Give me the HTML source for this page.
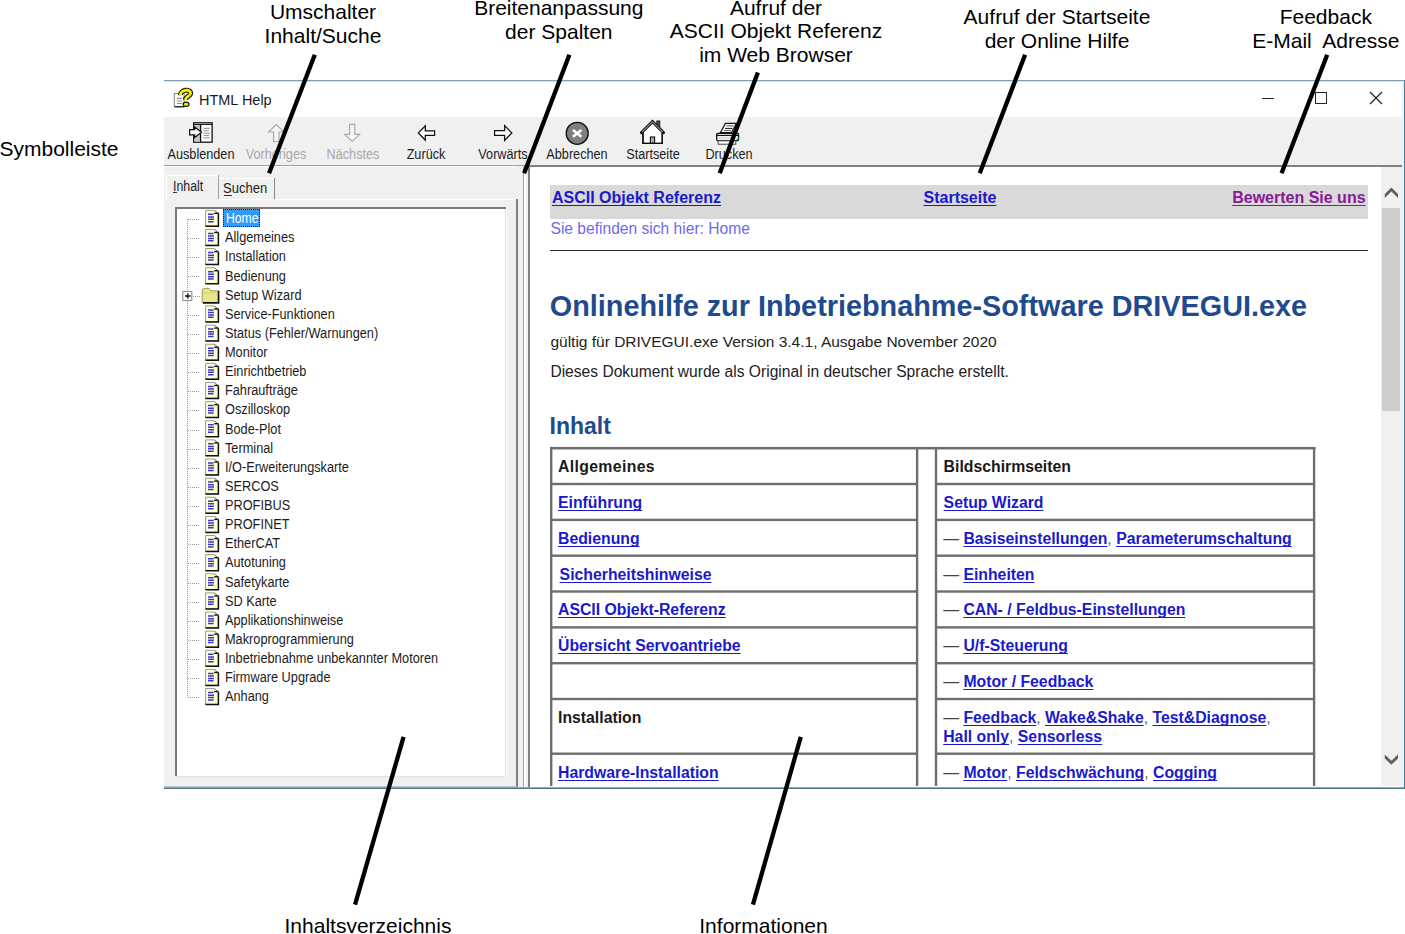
<!DOCTYPE html>
<html><head><meta charset="utf-8"><title>HTML Help</title>
<style>
html,body{margin:0;padding:0;background:#fff;}
body{width:1405px;height:934px;position:relative;overflow:hidden;font-family:"Liberation Sans",sans-serif;}
.t{position:absolute;white-space:nowrap;font-family:"Liberation Sans",sans-serif;}
.r{position:absolute;}
u{text-decoration:underline;text-decoration-skip-ink:none;text-underline-offset:2px;}
.t{text-decoration-skip-ink:none;text-underline-offset:2px;}
</style></head><body>
<div class="r" style="left:164px;top:80px;width:1241px;height:1px;background:#7d9fb3;"></div>
<div class="r" style="left:164px;top:81px;width:1241px;height:1px;background:#d6e4ec;"></div>
<div class="r" style="left:1402px;top:81px;width:2px;height:706px;background:#e8f4f7;"></div>
<div class="r" style="left:1404px;top:80px;width:1px;height:709px;background:#4f7d92;"></div>
<div class="r" style="left:164px;top:787px;width:1241px;height:1px;background:#8eaab6;"></div>
<div class="r" style="left:164px;top:788px;width:1241px;height:1px;background:#4f7585;"></div>
<div class="r" style="left:164px;top:786px;width:353px;height:1px;background:#b4c0c5;"></div>
<svg class="r" style="left:0;top:0" width="1405" height="934" viewBox="0 0 1405 934">
<rect x="174.3" y="93.5" width="9.8" height="13.2" fill="#fdfdfd" stroke="#8a8a8a" stroke-width="1.1"/>
<path d="M174.6 106.7 H184.4" stroke="#333" stroke-width="1.5"/>
<path d="M177 98.4 H182 M177 101 H182 M177 103.5 H182" stroke="#8c8c94" stroke-width="1.1"/>
<path d="M180.4 95.2 C180.2 89.8, 190.6 88.2, 190.6 93.2 C190.6 96.2, 185.6 96.6, 185.2 99.8" fill="none" stroke="#1c1c00" stroke-width="5"/>
<path d="M180.4 95.2 C180.2 89.8, 190.6 88.2, 190.6 93.2 C190.6 96.2, 185.6 96.6, 185.2 99.8" fill="none" stroke="#f4f400" stroke-width="2.8"/>
<ellipse cx="186.1" cy="104.3" rx="2.9" ry="2.1" fill="#f4f400" stroke="#1c1c00" stroke-width="1.2"/>
</svg>
<div class="t" style="left:199.00px;top:91.50px;font-size:15px;line-height:15px;font-weight:400;color:#1a1a1a;transform:scaleX(0.965);transform-origin:0 50%;">HTML Help</div>
<div class="r" style="left:1262px;top:98px;width:12px;height:1px;background:#222;"></div>
<div class="r" style="left:1315px;top:92px;width:10px;height:10px;border:1px solid #222"></div>
<svg class="r" style="left:1369px;top:91px" width="14" height="14" viewBox="0 0 14 14">
<path d="M1 1 L13 13 M13 1 L1 13" stroke="#222" stroke-width="1.2"/></svg>
<div class="r" style="left:164px;top:117px;width:1239px;height:48px;background:#f0f0f0;"></div>
<div class="r" style="left:164px;top:165px;width:360px;height:1px;background:#a0a0a0;"></div>
<div class="r" style="left:164px;top:166px;width:353px;height:621px;background:#f0f0f0;"></div>
<div class="r" style="left:164px;top:166px;width:353px;height:1px;background:#ffffff;"></div>
<div class="r" style="left:517px;top:166px;width:11px;height:621px;background:#f0f0f0;"></div>
<div class="r" style="left:516px;top:199px;width:2px;height:588px;background:#808080;"></div>
<div class="r" style="left:523px;top:167px;width:1px;height:620px;background:#a0a0a0;"></div>
<div class="r" style="left:524px;top:167px;width:2px;height:620px;background:#ffffff;"></div>
<div class="r" style="left:524px;top:165px;width:878px;height:2px;background:#808080;"></div>
<div class="r" style="left:528px;top:167px;width:2px;height:620px;background:#808080;"></div>
<svg class="r" style="left:0;top:0" width="1405" height="934" viewBox="0 0 1405 934">
<!-- Ausblenden -->
<g transform="translate(189,121)">
 <rect x="4.7" y="1.8" width="18.4" height="19.4" fill="#fff" stroke="#111" stroke-width="1.3"/>
 <rect x="5.4" y="3.6" width="5.9" height="17" fill="#c4c4cc"/>
 <path d="M4.7 3.4 H23.1" stroke="#111" stroke-width="1.2"/>
 <path d="M5.4 2.6 H22.4" stroke="#999" stroke-width="0.8"/>
 <path d="M11.6 3.4 V21.2" stroke="#111" stroke-width="1.3"/>
 <path d="M14.5 7.3 H20.8 M14.5 9.8 H20 M14.5 12.3 H20.8 M14.5 14.6 H20 M14.5 16.9 H20.8" stroke="#8a8a8a" stroke-width="1"/>
 <path d="M0.6 8.6 H5.6 V5.9 L12.6 11.3 L5.6 16.6 V13.8 H0.6 Z" fill="#fafafa" stroke="#111" stroke-width="1.2" stroke-linejoin="miter"/>
</g>
<!-- Vorheriges (up arrow, disabled) -->
<path d="M276.3 124.6 L284 132 H279 V141.5 H273.6 V132 H268.6 Z" fill="#f6f6f6" stroke="#a9a9a9" stroke-width="1.2"/>
<!-- Naechstes (down arrow, disabled) -->
<path d="M352.2 141.4 L359.6 134.4 H354.8 V124.4 H349.6 V134.4 H344.6 Z" fill="#f6f6f6" stroke="#a9a9a9" stroke-width="1.2"/>
<!-- Zurueck -->
<path d="M418.4 132.9 L425.3 125.8 V130.9 H434.6 V135.3 H425.3 V140.2 Z" fill="#fff" stroke="#111" stroke-width="1.25"/>
<!-- Vorwaerts -->
<path d="M511.8 132.9 L504.6 125.6 V130.6 H494.6 V135.3 H504.6 V140.4 Z" fill="#fff" stroke="#111" stroke-width="1.25"/>
<!-- Abbrechen -->
<circle cx="577.2" cy="133.3" r="11" fill="#808080" stroke="#111" stroke-width="1.3"/>
<path d="M573 129.9 L581.4 136.7 M581.4 129.9 L573 136.7" stroke="#fff" stroke-width="2.6"/>
<!-- Startseite -->
<rect x="656.8" y="121" width="3" height="8" fill="#555" stroke="#111" stroke-width="0.9"/>
<path d="M643 132 V143.3 H662.2 V132" fill="#fff" stroke="#111" stroke-width="1.4"/>
<path d="M641.6 132.6 L652.5 121.7 L663.4 132.6" fill="none" stroke="#111" stroke-width="3.2" stroke-linecap="round"/>
<path d="M642 132.2 L652.5 121.7 L663 132.2" fill="none" stroke="#999" stroke-width="1.1"/>
<path d="M643.8 132.4 L652.5 123.9 L661.4 132.4 V142.6 H643.8 Z" fill="#fff"/>
<rect x="650.4" y="137.0" width="4.2" height="6.3" fill="#aaa" stroke="#111" stroke-width="1.1"/>
<path d="M643 132.4 V143.4 H662.2 V132.4" fill="none" stroke="#111" stroke-width="1.4"/>
<!-- Drucken -->
<path d="M725.4 123.4 H736.4 L731.6 132.6 H720.4 Z" fill="#fff" stroke="#111" stroke-width="1.2"/>
<path d="M726.4 125.8 H733.5" stroke="#777" stroke-width="1.3"/>
<path d="M725 128.4 H732.3" stroke="#111" stroke-width="1"/>
<path d="M723.8 130.6 H731" stroke="#555" stroke-width="1"/>
<rect x="716.7" y="133.4" width="21.8" height="7.2" rx="1" fill="#fff" stroke="#111" stroke-width="1.4"/>
<rect x="718.3" y="136.5" width="16" height="3" fill="#ddd"/>
<path d="M716.7 135.4 H738" stroke="#111" stroke-width="1.2"/>
<rect x="718.2" y="140.8" width="17.6" height="3.4" fill="#fff" stroke="#444" stroke-width="1"/>
<path d="M736 140 L738.5 138" stroke="#3cc" stroke-width="1.4"/>
</svg>
<div class="t" style="left:-199.30px;width:800px;text-align:center;top:146.75px;font-size:14px;line-height:14px;font-weight:400;color:#1c1c1c;transform:scaleX(0.905);transform-origin:50% 50%;">Ausblenden</div>
<div class="t" style="left:-123.60px;width:800px;text-align:center;top:146.75px;font-size:14px;line-height:14px;font-weight:400;color:#a8a8a8;transform:scaleX(0.905);transform-origin:50% 50%;">Vorheriges</div>
<div class="t" style="left:-47.40px;width:800px;text-align:center;top:146.75px;font-size:14px;line-height:14px;font-weight:400;color:#a8a8a8;transform:scaleX(0.905);transform-origin:50% 50%;">Nächstes</div>
<div class="t" style="left:26.20px;width:800px;text-align:center;top:146.75px;font-size:14px;line-height:14px;font-weight:400;color:#1c1c1c;transform:scaleX(0.905);transform-origin:50% 50%;">Zurück</div>
<div class="t" style="left:102.50px;width:800px;text-align:center;top:146.75px;font-size:14px;line-height:14px;font-weight:400;color:#1c1c1c;transform:scaleX(0.905);transform-origin:50% 50%;">Vorwärts</div>
<div class="t" style="left:177.30px;width:800px;text-align:center;top:146.75px;font-size:14px;line-height:14px;font-weight:400;color:#1c1c1c;transform:scaleX(0.905);transform-origin:50% 50%;">Abbrechen</div>
<div class="t" style="left:252.70px;width:800px;text-align:center;top:146.75px;font-size:14px;line-height:14px;font-weight:400;color:#1c1c1c;transform:scaleX(0.905);transform-origin:50% 50%;">Startseite</div>
<div class="t" style="left:328.50px;width:800px;text-align:center;top:146.75px;font-size:14px;line-height:14px;font-weight:400;color:#1c1c1c;transform:scaleX(0.905);transform-origin:50% 50%;">Drucken</div>
<div class="r" style="left:165px;top:199px;width:351px;height:1px;background:#ffffff;"></div>
<div class="r" style="left:166px;top:175px;width:1px;height:24px;background:#ffffff;"></div>
<div class="r" style="left:166px;top:175px;width:52px;height:1px;background:#ffffff;"></div>
<div class="r" style="left:218px;top:175px;width:1px;height:24px;background:#a0a0a0;"></div>
<div class="r" style="left:166px;top:199px;width:52px;height:1px;background:#f0f0f0;"></div>
<div class="r" style="left:219px;top:178px;width:55px;height:1px;background:#ffffff;"></div>
<div class="r" style="left:274px;top:178px;width:1px;height:21px;background:#888888;"></div>
<div class="t" style="left:173.20px;top:179.35px;font-size:14px;line-height:14px;font-weight:400;color:#1c1c1c;transform:scaleX(0.88);transform-origin:0 50%;">Inhalt</div>
<div class="r" style="left:173px;top:192px;width:4px;height:1px;background:#333;"></div>
<div class="t" style="left:223.20px;top:180.95px;font-size:14px;line-height:14px;font-weight:400;color:#1c1c1c;transform:scaleX(0.93);transform-origin:0 50%;">Suchen</div>
<div class="r" style="left:224px;top:195px;width:8px;height:1px;background:#333;"></div>
<div class="r" style="left:175px;top:207px;width:332px;height:570px;background:#ffffff;"></div>
<div class="r" style="left:175px;top:207px;width:331px;height:2px;background:#7a7a7a;"></div>
<div class="r" style="left:175px;top:207px;width:2px;height:569px;background:#7a7a7a;"></div>
<div class="r" style="left:505px;top:209px;width:1px;height:567px;background:#e3e3e3;"></div>
<div class="r" style="left:175px;top:776px;width:331px;height:1px;background:#e3e3e3;"></div>
<svg class="r" style="left:0;top:0" width="1405" height="934" viewBox="0 0 1405 934">
<path d="M187.5 219.1 V697.4" stroke="#9a9a9a" stroke-width="1" stroke-dasharray="1 1"/>
<path d="M188 219.5 H200" stroke="#9a9a9a" stroke-width="1" stroke-dasharray="1 1"/>
<g transform="translate(205,209.70)"><path d="M0.6 0.6 H9.6 L13.4 4.4 V16.4 H0.6 Z" fill="#ffffd6" stroke="#9a9a9a" stroke-width="1"/><path d="M13.4 4.0 V16.6 H0.4" fill="none" stroke="#111" stroke-width="1.5"/><path d="M9.6 0.6 L13.4 4.4" stroke="#777" stroke-width="1"/><path d="M9.2 3.6 H13.6" stroke="#111" stroke-width="1.4"/><path d="M3 4.6 H8.6 M3 7.2 H9 M3 9.6 H9 M3 12 H8.6" stroke="#3a3ad0" stroke-width="1.5"/></g>
<path d="M188 238.5 H200" stroke="#9a9a9a" stroke-width="1" stroke-dasharray="1 1"/>
<g transform="translate(205,228.83)"><path d="M0.6 0.6 H9.6 L13.4 4.4 V16.4 H0.6 Z" fill="#ffffd6" stroke="#9a9a9a" stroke-width="1"/><path d="M13.4 4.0 V16.6 H0.4" fill="none" stroke="#111" stroke-width="1.5"/><path d="M9.6 0.6 L13.4 4.4" stroke="#777" stroke-width="1"/><path d="M9.2 3.6 H13.6" stroke="#111" stroke-width="1.4"/><path d="M3 4.6 H8.6 M3 7.2 H9 M3 9.6 H9 M3 12 H8.6" stroke="#3a3ad0" stroke-width="1.5"/></g>
<path d="M188 257.5 H200" stroke="#9a9a9a" stroke-width="1" stroke-dasharray="1 1"/>
<g transform="translate(205,247.96)"><path d="M0.6 0.6 H9.6 L13.4 4.4 V16.4 H0.6 Z" fill="#ffffd6" stroke="#9a9a9a" stroke-width="1"/><path d="M13.4 4.0 V16.6 H0.4" fill="none" stroke="#111" stroke-width="1.5"/><path d="M9.6 0.6 L13.4 4.4" stroke="#777" stroke-width="1"/><path d="M9.2 3.6 H13.6" stroke="#111" stroke-width="1.4"/><path d="M3 4.6 H8.6 M3 7.2 H9 M3 9.6 H9 M3 12 H8.6" stroke="#3a3ad0" stroke-width="1.5"/></g>
<path d="M188 276.5 H200" stroke="#9a9a9a" stroke-width="1" stroke-dasharray="1 1"/>
<g transform="translate(205,267.09)"><path d="M0.6 0.6 H9.6 L13.4 4.4 V16.4 H0.6 Z" fill="#ffffd6" stroke="#9a9a9a" stroke-width="1"/><path d="M13.4 4.0 V16.6 H0.4" fill="none" stroke="#111" stroke-width="1.5"/><path d="M9.6 0.6 L13.4 4.4" stroke="#777" stroke-width="1"/><path d="M9.2 3.6 H13.6" stroke="#111" stroke-width="1.4"/><path d="M3 4.6 H8.6 M3 7.2 H9 M3 9.6 H9 M3 12 H8.6" stroke="#3a3ad0" stroke-width="1.5"/></g>
<path d="M193 296.5 H200" stroke="#9a9a9a" stroke-width="1" stroke-dasharray="1 1"/>
<rect x="182.8" y="291.5" width="9" height="9" fill="#fff" stroke="#8e8e8e" stroke-width="1.1"/>
<path d="M185 296.0 H190.6 M187.8 293.2 V298.8" stroke="#111" stroke-width="1.3"/>
<g transform="translate(201.4,287.82)"><path d="M0.8 3.2 Q0.8 0.6 3.2 0.6 H7.6 L9.6 3.0 H16.8 V14.6 H0.8 Z" fill="#e8e888" stroke="#9a9a60" stroke-width="1"/><path d="M1.2 5.0 H16.2" stroke="#d4d460" stroke-width="1"/><path d="M17.2 3.0 V15.1 H1.5" fill="none" stroke="#111" stroke-width="1.6"/></g>
<path d="M188 315.5 H200" stroke="#9a9a9a" stroke-width="1" stroke-dasharray="1 1"/>
<g transform="translate(205,305.35)"><path d="M0.6 0.6 H9.6 L13.4 4.4 V16.4 H0.6 Z" fill="#ffffd6" stroke="#9a9a9a" stroke-width="1"/><path d="M13.4 4.0 V16.6 H0.4" fill="none" stroke="#111" stroke-width="1.5"/><path d="M9.6 0.6 L13.4 4.4" stroke="#777" stroke-width="1"/><path d="M9.2 3.6 H13.6" stroke="#111" stroke-width="1.4"/><path d="M3 4.6 H8.6 M3 7.2 H9 M3 9.6 H9 M3 12 H8.6" stroke="#3a3ad0" stroke-width="1.5"/></g>
<path d="M188 334.5 H200" stroke="#9a9a9a" stroke-width="1" stroke-dasharray="1 1"/>
<g transform="translate(205,324.48)"><path d="M0.6 0.6 H9.6 L13.4 4.4 V16.4 H0.6 Z" fill="#ffffd6" stroke="#9a9a9a" stroke-width="1"/><path d="M13.4 4.0 V16.6 H0.4" fill="none" stroke="#111" stroke-width="1.5"/><path d="M9.6 0.6 L13.4 4.4" stroke="#777" stroke-width="1"/><path d="M9.2 3.6 H13.6" stroke="#111" stroke-width="1.4"/><path d="M3 4.6 H8.6 M3 7.2 H9 M3 9.6 H9 M3 12 H8.6" stroke="#3a3ad0" stroke-width="1.5"/></g>
<path d="M188 353.5 H200" stroke="#9a9a9a" stroke-width="1" stroke-dasharray="1 1"/>
<g transform="translate(205,343.61)"><path d="M0.6 0.6 H9.6 L13.4 4.4 V16.4 H0.6 Z" fill="#ffffd6" stroke="#9a9a9a" stroke-width="1"/><path d="M13.4 4.0 V16.6 H0.4" fill="none" stroke="#111" stroke-width="1.5"/><path d="M9.6 0.6 L13.4 4.4" stroke="#777" stroke-width="1"/><path d="M9.2 3.6 H13.6" stroke="#111" stroke-width="1.4"/><path d="M3 4.6 H8.6 M3 7.2 H9 M3 9.6 H9 M3 12 H8.6" stroke="#3a3ad0" stroke-width="1.5"/></g>
<path d="M188 372.5 H200" stroke="#9a9a9a" stroke-width="1" stroke-dasharray="1 1"/>
<g transform="translate(205,362.74)"><path d="M0.6 0.6 H9.6 L13.4 4.4 V16.4 H0.6 Z" fill="#ffffd6" stroke="#9a9a9a" stroke-width="1"/><path d="M13.4 4.0 V16.6 H0.4" fill="none" stroke="#111" stroke-width="1.5"/><path d="M9.6 0.6 L13.4 4.4" stroke="#777" stroke-width="1"/><path d="M9.2 3.6 H13.6" stroke="#111" stroke-width="1.4"/><path d="M3 4.6 H8.6 M3 7.2 H9 M3 9.6 H9 M3 12 H8.6" stroke="#3a3ad0" stroke-width="1.5"/></g>
<path d="M188 391.5 H200" stroke="#9a9a9a" stroke-width="1" stroke-dasharray="1 1"/>
<g transform="translate(205,381.87)"><path d="M0.6 0.6 H9.6 L13.4 4.4 V16.4 H0.6 Z" fill="#ffffd6" stroke="#9a9a9a" stroke-width="1"/><path d="M13.4 4.0 V16.6 H0.4" fill="none" stroke="#111" stroke-width="1.5"/><path d="M9.6 0.6 L13.4 4.4" stroke="#777" stroke-width="1"/><path d="M9.2 3.6 H13.6" stroke="#111" stroke-width="1.4"/><path d="M3 4.6 H8.6 M3 7.2 H9 M3 9.6 H9 M3 12 H8.6" stroke="#3a3ad0" stroke-width="1.5"/></g>
<path d="M188 410.5 H200" stroke="#9a9a9a" stroke-width="1" stroke-dasharray="1 1"/>
<g transform="translate(205,401.00)"><path d="M0.6 0.6 H9.6 L13.4 4.4 V16.4 H0.6 Z" fill="#ffffd6" stroke="#9a9a9a" stroke-width="1"/><path d="M13.4 4.0 V16.6 H0.4" fill="none" stroke="#111" stroke-width="1.5"/><path d="M9.6 0.6 L13.4 4.4" stroke="#777" stroke-width="1"/><path d="M9.2 3.6 H13.6" stroke="#111" stroke-width="1.4"/><path d="M3 4.6 H8.6 M3 7.2 H9 M3 9.6 H9 M3 12 H8.6" stroke="#3a3ad0" stroke-width="1.5"/></g>
<path d="M188 430.5 H200" stroke="#9a9a9a" stroke-width="1" stroke-dasharray="1 1"/>
<g transform="translate(205,420.13)"><path d="M0.6 0.6 H9.6 L13.4 4.4 V16.4 H0.6 Z" fill="#ffffd6" stroke="#9a9a9a" stroke-width="1"/><path d="M13.4 4.0 V16.6 H0.4" fill="none" stroke="#111" stroke-width="1.5"/><path d="M9.6 0.6 L13.4 4.4" stroke="#777" stroke-width="1"/><path d="M9.2 3.6 H13.6" stroke="#111" stroke-width="1.4"/><path d="M3 4.6 H8.6 M3 7.2 H9 M3 9.6 H9 M3 12 H8.6" stroke="#3a3ad0" stroke-width="1.5"/></g>
<path d="M188 449.5 H200" stroke="#9a9a9a" stroke-width="1" stroke-dasharray="1 1"/>
<g transform="translate(205,439.26)"><path d="M0.6 0.6 H9.6 L13.4 4.4 V16.4 H0.6 Z" fill="#ffffd6" stroke="#9a9a9a" stroke-width="1"/><path d="M13.4 4.0 V16.6 H0.4" fill="none" stroke="#111" stroke-width="1.5"/><path d="M9.6 0.6 L13.4 4.4" stroke="#777" stroke-width="1"/><path d="M9.2 3.6 H13.6" stroke="#111" stroke-width="1.4"/><path d="M3 4.6 H8.6 M3 7.2 H9 M3 9.6 H9 M3 12 H8.6" stroke="#3a3ad0" stroke-width="1.5"/></g>
<path d="M188 468.5 H200" stroke="#9a9a9a" stroke-width="1" stroke-dasharray="1 1"/>
<g transform="translate(205,458.39)"><path d="M0.6 0.6 H9.6 L13.4 4.4 V16.4 H0.6 Z" fill="#ffffd6" stroke="#9a9a9a" stroke-width="1"/><path d="M13.4 4.0 V16.6 H0.4" fill="none" stroke="#111" stroke-width="1.5"/><path d="M9.6 0.6 L13.4 4.4" stroke="#777" stroke-width="1"/><path d="M9.2 3.6 H13.6" stroke="#111" stroke-width="1.4"/><path d="M3 4.6 H8.6 M3 7.2 H9 M3 9.6 H9 M3 12 H8.6" stroke="#3a3ad0" stroke-width="1.5"/></g>
<path d="M188 487.5 H200" stroke="#9a9a9a" stroke-width="1" stroke-dasharray="1 1"/>
<g transform="translate(205,477.52)"><path d="M0.6 0.6 H9.6 L13.4 4.4 V16.4 H0.6 Z" fill="#ffffd6" stroke="#9a9a9a" stroke-width="1"/><path d="M13.4 4.0 V16.6 H0.4" fill="none" stroke="#111" stroke-width="1.5"/><path d="M9.6 0.6 L13.4 4.4" stroke="#777" stroke-width="1"/><path d="M9.2 3.6 H13.6" stroke="#111" stroke-width="1.4"/><path d="M3 4.6 H8.6 M3 7.2 H9 M3 9.6 H9 M3 12 H8.6" stroke="#3a3ad0" stroke-width="1.5"/></g>
<path d="M188 506.5 H200" stroke="#9a9a9a" stroke-width="1" stroke-dasharray="1 1"/>
<g transform="translate(205,496.65)"><path d="M0.6 0.6 H9.6 L13.4 4.4 V16.4 H0.6 Z" fill="#ffffd6" stroke="#9a9a9a" stroke-width="1"/><path d="M13.4 4.0 V16.6 H0.4" fill="none" stroke="#111" stroke-width="1.5"/><path d="M9.6 0.6 L13.4 4.4" stroke="#777" stroke-width="1"/><path d="M9.2 3.6 H13.6" stroke="#111" stroke-width="1.4"/><path d="M3 4.6 H8.6 M3 7.2 H9 M3 9.6 H9 M3 12 H8.6" stroke="#3a3ad0" stroke-width="1.5"/></g>
<path d="M188 525.5 H200" stroke="#9a9a9a" stroke-width="1" stroke-dasharray="1 1"/>
<g transform="translate(205,515.78)"><path d="M0.6 0.6 H9.6 L13.4 4.4 V16.4 H0.6 Z" fill="#ffffd6" stroke="#9a9a9a" stroke-width="1"/><path d="M13.4 4.0 V16.6 H0.4" fill="none" stroke="#111" stroke-width="1.5"/><path d="M9.6 0.6 L13.4 4.4" stroke="#777" stroke-width="1"/><path d="M9.2 3.6 H13.6" stroke="#111" stroke-width="1.4"/><path d="M3 4.6 H8.6 M3 7.2 H9 M3 9.6 H9 M3 12 H8.6" stroke="#3a3ad0" stroke-width="1.5"/></g>
<path d="M188 544.5 H200" stroke="#9a9a9a" stroke-width="1" stroke-dasharray="1 1"/>
<g transform="translate(205,534.91)"><path d="M0.6 0.6 H9.6 L13.4 4.4 V16.4 H0.6 Z" fill="#ffffd6" stroke="#9a9a9a" stroke-width="1"/><path d="M13.4 4.0 V16.6 H0.4" fill="none" stroke="#111" stroke-width="1.5"/><path d="M9.6 0.6 L13.4 4.4" stroke="#777" stroke-width="1"/><path d="M9.2 3.6 H13.6" stroke="#111" stroke-width="1.4"/><path d="M3 4.6 H8.6 M3 7.2 H9 M3 9.6 H9 M3 12 H8.6" stroke="#3a3ad0" stroke-width="1.5"/></g>
<path d="M188 563.5 H200" stroke="#9a9a9a" stroke-width="1" stroke-dasharray="1 1"/>
<g transform="translate(205,554.04)"><path d="M0.6 0.6 H9.6 L13.4 4.4 V16.4 H0.6 Z" fill="#ffffd6" stroke="#9a9a9a" stroke-width="1"/><path d="M13.4 4.0 V16.6 H0.4" fill="none" stroke="#111" stroke-width="1.5"/><path d="M9.6 0.6 L13.4 4.4" stroke="#777" stroke-width="1"/><path d="M9.2 3.6 H13.6" stroke="#111" stroke-width="1.4"/><path d="M3 4.6 H8.6 M3 7.2 H9 M3 9.6 H9 M3 12 H8.6" stroke="#3a3ad0" stroke-width="1.5"/></g>
<path d="M188 583.5 H200" stroke="#9a9a9a" stroke-width="1" stroke-dasharray="1 1"/>
<g transform="translate(205,573.17)"><path d="M0.6 0.6 H9.6 L13.4 4.4 V16.4 H0.6 Z" fill="#ffffd6" stroke="#9a9a9a" stroke-width="1"/><path d="M13.4 4.0 V16.6 H0.4" fill="none" stroke="#111" stroke-width="1.5"/><path d="M9.6 0.6 L13.4 4.4" stroke="#777" stroke-width="1"/><path d="M9.2 3.6 H13.6" stroke="#111" stroke-width="1.4"/><path d="M3 4.6 H8.6 M3 7.2 H9 M3 9.6 H9 M3 12 H8.6" stroke="#3a3ad0" stroke-width="1.5"/></g>
<path d="M188 602.5 H200" stroke="#9a9a9a" stroke-width="1" stroke-dasharray="1 1"/>
<g transform="translate(205,592.30)"><path d="M0.6 0.6 H9.6 L13.4 4.4 V16.4 H0.6 Z" fill="#ffffd6" stroke="#9a9a9a" stroke-width="1"/><path d="M13.4 4.0 V16.6 H0.4" fill="none" stroke="#111" stroke-width="1.5"/><path d="M9.6 0.6 L13.4 4.4" stroke="#777" stroke-width="1"/><path d="M9.2 3.6 H13.6" stroke="#111" stroke-width="1.4"/><path d="M3 4.6 H8.6 M3 7.2 H9 M3 9.6 H9 M3 12 H8.6" stroke="#3a3ad0" stroke-width="1.5"/></g>
<path d="M188 621.5 H200" stroke="#9a9a9a" stroke-width="1" stroke-dasharray="1 1"/>
<g transform="translate(205,611.43)"><path d="M0.6 0.6 H9.6 L13.4 4.4 V16.4 H0.6 Z" fill="#ffffd6" stroke="#9a9a9a" stroke-width="1"/><path d="M13.4 4.0 V16.6 H0.4" fill="none" stroke="#111" stroke-width="1.5"/><path d="M9.6 0.6 L13.4 4.4" stroke="#777" stroke-width="1"/><path d="M9.2 3.6 H13.6" stroke="#111" stroke-width="1.4"/><path d="M3 4.6 H8.6 M3 7.2 H9 M3 9.6 H9 M3 12 H8.6" stroke="#3a3ad0" stroke-width="1.5"/></g>
<path d="M188 640.5 H200" stroke="#9a9a9a" stroke-width="1" stroke-dasharray="1 1"/>
<g transform="translate(205,630.56)"><path d="M0.6 0.6 H9.6 L13.4 4.4 V16.4 H0.6 Z" fill="#ffffd6" stroke="#9a9a9a" stroke-width="1"/><path d="M13.4 4.0 V16.6 H0.4" fill="none" stroke="#111" stroke-width="1.5"/><path d="M9.6 0.6 L13.4 4.4" stroke="#777" stroke-width="1"/><path d="M9.2 3.6 H13.6" stroke="#111" stroke-width="1.4"/><path d="M3 4.6 H8.6 M3 7.2 H9 M3 9.6 H9 M3 12 H8.6" stroke="#3a3ad0" stroke-width="1.5"/></g>
<path d="M188 659.5 H200" stroke="#9a9a9a" stroke-width="1" stroke-dasharray="1 1"/>
<g transform="translate(205,649.69)"><path d="M0.6 0.6 H9.6 L13.4 4.4 V16.4 H0.6 Z" fill="#ffffd6" stroke="#9a9a9a" stroke-width="1"/><path d="M13.4 4.0 V16.6 H0.4" fill="none" stroke="#111" stroke-width="1.5"/><path d="M9.6 0.6 L13.4 4.4" stroke="#777" stroke-width="1"/><path d="M9.2 3.6 H13.6" stroke="#111" stroke-width="1.4"/><path d="M3 4.6 H8.6 M3 7.2 H9 M3 9.6 H9 M3 12 H8.6" stroke="#3a3ad0" stroke-width="1.5"/></g>
<path d="M188 678.5 H200" stroke="#9a9a9a" stroke-width="1" stroke-dasharray="1 1"/>
<g transform="translate(205,668.82)"><path d="M0.6 0.6 H9.6 L13.4 4.4 V16.4 H0.6 Z" fill="#ffffd6" stroke="#9a9a9a" stroke-width="1"/><path d="M13.4 4.0 V16.6 H0.4" fill="none" stroke="#111" stroke-width="1.5"/><path d="M9.6 0.6 L13.4 4.4" stroke="#777" stroke-width="1"/><path d="M9.2 3.6 H13.6" stroke="#111" stroke-width="1.4"/><path d="M3 4.6 H8.6 M3 7.2 H9 M3 9.6 H9 M3 12 H8.6" stroke="#3a3ad0" stroke-width="1.5"/></g>
<path d="M188 697.5 H200" stroke="#9a9a9a" stroke-width="1" stroke-dasharray="1 1"/>
<g transform="translate(205,687.95)"><path d="M0.6 0.6 H9.6 L13.4 4.4 V16.4 H0.6 Z" fill="#ffffd6" stroke="#9a9a9a" stroke-width="1"/><path d="M13.4 4.0 V16.6 H0.4" fill="none" stroke="#111" stroke-width="1.5"/><path d="M9.6 0.6 L13.4 4.4" stroke="#777" stroke-width="1"/><path d="M9.2 3.6 H13.6" stroke="#111" stroke-width="1.4"/><path d="M3 4.6 H8.6 M3 7.2 H9 M3 9.6 H9 M3 12 H8.6" stroke="#3a3ad0" stroke-width="1.5"/></g>
</svg>
<div class="r" style="left:223px;top:209px;width:37px;height:18px;background:#3399ff;outline:1px dotted #222;outline-offset:-1px"></div>
<div class="t" style="left:225.60px;top:211.15px;font-size:14px;line-height:14px;font-weight:400;color:#ffffff;transform:scaleX(0.87);transform-origin:0 50%;">Home</div>
<div class="t" style="left:224.60px;top:230.28px;font-size:14px;line-height:14px;font-weight:400;color:#1c1c1c;transform:scaleX(0.91);transform-origin:0 50%;">Allgemeines</div>
<div class="t" style="left:224.60px;top:249.41px;font-size:14px;line-height:14px;font-weight:400;color:#1c1c1c;transform:scaleX(0.91);transform-origin:0 50%;">Installation</div>
<div class="t" style="left:224.60px;top:268.54px;font-size:14px;line-height:14px;font-weight:400;color:#1c1c1c;transform:scaleX(0.91);transform-origin:0 50%;">Bedienung</div>
<div class="t" style="left:224.60px;top:287.67px;font-size:14px;line-height:14px;font-weight:400;color:#1c1c1c;transform:scaleX(0.91);transform-origin:0 50%;">Setup Wizard</div>
<div class="t" style="left:224.60px;top:306.80px;font-size:14px;line-height:14px;font-weight:400;color:#1c1c1c;transform:scaleX(0.91);transform-origin:0 50%;">Service-Funktionen</div>
<div class="t" style="left:224.60px;top:325.93px;font-size:14px;line-height:14px;font-weight:400;color:#1c1c1c;transform:scaleX(0.91);transform-origin:0 50%;">Status (Fehler/Warnungen)</div>
<div class="t" style="left:224.60px;top:345.06px;font-size:14px;line-height:14px;font-weight:400;color:#1c1c1c;transform:scaleX(0.91);transform-origin:0 50%;">Monitor</div>
<div class="t" style="left:224.60px;top:364.19px;font-size:14px;line-height:14px;font-weight:400;color:#1c1c1c;transform:scaleX(0.91);transform-origin:0 50%;">Einrichtbetrieb</div>
<div class="t" style="left:224.60px;top:383.32px;font-size:14px;line-height:14px;font-weight:400;color:#1c1c1c;transform:scaleX(0.91);transform-origin:0 50%;">Fahraufträge</div>
<div class="t" style="left:224.60px;top:402.45px;font-size:14px;line-height:14px;font-weight:400;color:#1c1c1c;transform:scaleX(0.91);transform-origin:0 50%;">Oszilloskop</div>
<div class="t" style="left:224.60px;top:421.58px;font-size:14px;line-height:14px;font-weight:400;color:#1c1c1c;transform:scaleX(0.91);transform-origin:0 50%;">Bode-Plot</div>
<div class="t" style="left:224.60px;top:440.71px;font-size:14px;line-height:14px;font-weight:400;color:#1c1c1c;transform:scaleX(0.91);transform-origin:0 50%;">Terminal</div>
<div class="t" style="left:224.60px;top:459.84px;font-size:14px;line-height:14px;font-weight:400;color:#1c1c1c;transform:scaleX(0.91);transform-origin:0 50%;">I/O-Erweiterungskarte</div>
<div class="t" style="left:224.60px;top:478.97px;font-size:14px;line-height:14px;font-weight:400;color:#1c1c1c;transform:scaleX(0.91);transform-origin:0 50%;">SERCOS</div>
<div class="t" style="left:224.60px;top:498.10px;font-size:14px;line-height:14px;font-weight:400;color:#1c1c1c;transform:scaleX(0.91);transform-origin:0 50%;">PROFIBUS</div>
<div class="t" style="left:224.60px;top:517.23px;font-size:14px;line-height:14px;font-weight:400;color:#1c1c1c;transform:scaleX(0.91);transform-origin:0 50%;">PROFINET</div>
<div class="t" style="left:224.60px;top:536.36px;font-size:14px;line-height:14px;font-weight:400;color:#1c1c1c;transform:scaleX(0.91);transform-origin:0 50%;">EtherCAT</div>
<div class="t" style="left:224.60px;top:555.49px;font-size:14px;line-height:14px;font-weight:400;color:#1c1c1c;transform:scaleX(0.91);transform-origin:0 50%;">Autotuning</div>
<div class="t" style="left:224.60px;top:574.62px;font-size:14px;line-height:14px;font-weight:400;color:#1c1c1c;transform:scaleX(0.91);transform-origin:0 50%;">Safetykarte</div>
<div class="t" style="left:224.60px;top:593.75px;font-size:14px;line-height:14px;font-weight:400;color:#1c1c1c;transform:scaleX(0.91);transform-origin:0 50%;">SD Karte</div>
<div class="t" style="left:224.60px;top:612.88px;font-size:14px;line-height:14px;font-weight:400;color:#1c1c1c;transform:scaleX(0.91);transform-origin:0 50%;">Applikationshinweise</div>
<div class="t" style="left:224.60px;top:632.01px;font-size:14px;line-height:14px;font-weight:400;color:#1c1c1c;transform:scaleX(0.91);transform-origin:0 50%;">Makroprogrammierung</div>
<div class="t" style="left:224.60px;top:651.14px;font-size:14px;line-height:14px;font-weight:400;color:#1c1c1c;transform:scaleX(0.91);transform-origin:0 50%;">Inbetriebnahme unbekannter Motoren</div>
<div class="t" style="left:224.60px;top:670.27px;font-size:14px;line-height:14px;font-weight:400;color:#1c1c1c;transform:scaleX(0.91);transform-origin:0 50%;">Firmware Upgrade</div>
<div class="t" style="left:224.60px;top:689.40px;font-size:14px;line-height:14px;font-weight:400;color:#1c1c1c;transform:scaleX(0.91);transform-origin:0 50%;">Anhang</div>
<div class="r" style="left:530px;top:167px;width:851px;height:620px;background:#ffffff;"></div>
<div class="r" style="left:1381px;top:167px;width:21px;height:619px;background:#f0f0f0;"></div>
<div class="r" style="left:1382px;top:208px;width:18px;height:203px;background:#cdcdcd;"></div>
<svg class="r" style="left:0;top:0" width="1405" height="934" viewBox="0 0 1405 934">
<path d="M1384.8 194.0 L1391.4 187.6 L1398.0 194.0 V198.0 L1391.4 191.6 L1384.8 198.0 Z" fill="#606060"/>
<path d="M1384.8 754.4 L1391.4 760.8 L1398.0 754.4 V758.4 L1391.4 764.8 L1384.8 758.4 Z" fill="#606060"/>
</svg>
<div class="r" style="left:550px;top:185px;width:818px;height:34px;background:#d9d9d9;"></div>
<div class="t" style="left:552.00px;top:190.26px;font-size:16px;line-height:16px;font-weight:700;color:#1a1acc;text-decoration:underline;">ASCII Objekt Referenz</div>
<div class="t" style="left:923.50px;top:190.26px;font-size:16px;line-height:16px;font-weight:700;color:#1a1acc;text-decoration:underline;">Startseite</div>
<div class="t" style="left:1232.20px;top:190.26px;font-size:16px;line-height:16px;font-weight:700;color:#861a96;text-decoration:underline;">Bewerten Sie uns</div>
<div class="t" style="left:550.50px;top:221.29px;font-size:15.6px;line-height:15.6px;font-weight:400;color:#6b6bea;">Sie befinden sich hier: Home</div>
<div class="r" style="left:550px;top:250px;width:818px;height:1px;background:#2a2a2a;"></div>
<div class="t" style="left:549.80px;top:291.50px;font-size:28.82px;line-height:28.82px;font-weight:700;color:#1f4b8e;">Onlinehilfe zur Inbetriebnahme-Software DRIVEGUI.exe</div>
<div class="t" style="left:550.40px;top:334.48px;font-size:15.5px;line-height:15.5px;font-weight:400;color:#222;">gültig für DRIVEGUI.exe Version 3.4.1, Ausgabe November 2020</div>
<div class="t" style="left:550.40px;top:363.99px;font-size:15.6px;line-height:15.6px;font-weight:400;color:#222;">Dieses Dokument wurde als Original in deutscher Sprache erstellt.</div>
<div class="t" style="left:549.60px;top:414.53px;font-size:23px;line-height:23px;font-weight:700;color:#1f4b8e;">Inhalt</div>
<svg class="r" style="left:0;top:0" width="1405" height="934" viewBox="0 0 1405 934">
<rect x="550" y="446.95" width="765.5" height="2.5" fill="#6e6e6e"/>
<rect x="550" y="482.8" width="368" height="2.4" fill="#6e6e6e"/>
<rect x="935" y="482.8" width="380" height="2.4" fill="#6e6e6e"/>
<rect x="550" y="518.6999999999999" width="368" height="2.4" fill="#6e6e6e"/>
<rect x="935" y="518.6999999999999" width="380" height="2.4" fill="#6e6e6e"/>
<rect x="550" y="554.5" width="368" height="2.4" fill="#6e6e6e"/>
<rect x="935" y="554.5" width="380" height="2.4" fill="#6e6e6e"/>
<rect x="550" y="590.3" width="368" height="2.4" fill="#6e6e6e"/>
<rect x="935" y="590.3" width="380" height="2.4" fill="#6e6e6e"/>
<rect x="550" y="626.1999999999999" width="368" height="2.4" fill="#6e6e6e"/>
<rect x="935" y="626.1999999999999" width="380" height="2.4" fill="#6e6e6e"/>
<rect x="550" y="662.0" width="368" height="2.4" fill="#6e6e6e"/>
<rect x="935" y="662.0" width="380" height="2.4" fill="#6e6e6e"/>
<rect x="550" y="697.8" width="368" height="2.4" fill="#6e6e6e"/>
<rect x="935" y="697.8" width="380" height="2.4" fill="#6e6e6e"/>
<rect x="550" y="752.5" width="368" height="2.4" fill="#6e6e6e"/>
<rect x="935" y="752.5" width="380" height="2.4" fill="#6e6e6e"/>
<rect x="550.0" y="446.95" width="2.4" height="339.05" fill="#6e6e6e"/>
<rect x="915.9" y="446.95" width="2.4" height="339.05" fill="#6e6e6e"/>
<rect x="934.8" y="446.95" width="2.4" height="339.05" fill="#6e6e6e"/>
<rect x="1312.8999999999999" y="446.95" width="2.4" height="339.05" fill="#6e6e6e"/>
</svg>
<div class="t" style="left:558.00px;top:459.13px;font-size:15.8px;line-height:15.8px;font-weight:700;color:#1a1a1a;letter-spacing:0.35px;">Allgemeines</div>
<div class="t" style="left:558.00px;top:494.96px;font-size:15.8px;line-height:15.8px;font-weight:700;color:#1a1acc;text-decoration:underline;">Einführung</div>
<div class="t" style="left:558.00px;top:530.79px;font-size:15.8px;line-height:15.8px;font-weight:700;color:#1a1acc;text-decoration:underline;">Bedienung</div>
<div class="t" style="left:559.60px;top:566.62px;font-size:15.8px;line-height:15.8px;font-weight:700;color:#1a1acc;text-decoration:underline;">Sicherheitshinweise</div>
<div class="t" style="left:558.00px;top:602.45px;font-size:15.8px;line-height:15.8px;font-weight:700;color:#1a1acc;text-decoration:underline;">ASCII Objekt-Referenz</div>
<div class="t" style="left:558.00px;top:638.28px;font-size:15.8px;line-height:15.8px;font-weight:700;color:#1a1acc;text-decoration:underline;">Übersicht Servoantriebe</div>
<div class="t" style="left:558.00px;top:709.94px;font-size:15.8px;line-height:15.8px;font-weight:700;color:#1a1a1a;">Installation</div>
<div class="t" style="left:558.00px;top:764.73px;font-size:15.8px;line-height:15.8px;font-weight:700;color:#1a1acc;text-decoration:underline;">Hardware-Installation</div>
<div class="t" style="left:943.60px;top:459.13px;font-size:15.8px;line-height:15.8px;font-weight:700;color:#1a1a1a;">Bildschirmseiten</div>
<div class="t" style="left:943.60px;top:494.96px;font-size:15.8px;line-height:15.8px;font-weight:700;color:#1a1acc;text-decoration:underline;">Setup Wizard</div>
<div class="t" style="left:943.20px;top:530.79px;font-size:15.8px;line-height:15.8px;font-weight:700;color:#222;"><span style="font-weight:400;color:#444">—</span> <u style="color:#1a1acc">Basiseinstellungen</u><span style="font-weight:400;color:#666">,</span> <u style="color:#1a1acc">Parameterumschaltung</u></div>
<div class="t" style="left:943.20px;top:566.62px;font-size:15.8px;line-height:15.8px;font-weight:700;color:#222;"><span style="font-weight:400;color:#444">—</span> <u style="color:#1a1acc">Einheiten</u></div>
<div class="t" style="left:943.20px;top:602.45px;font-size:15.8px;line-height:15.8px;font-weight:700;color:#222;"><span style="font-weight:400;color:#444">—</span> <u style="color:#1a1acc">CAN- / Feldbus-Einstellungen</u></div>
<div class="t" style="left:943.20px;top:638.28px;font-size:15.8px;line-height:15.8px;font-weight:700;color:#222;"><span style="font-weight:400;color:#444">—</span> <u style="color:#1a1acc">U/f-Steuerung</u></div>
<div class="t" style="left:943.20px;top:674.11px;font-size:15.8px;line-height:15.8px;font-weight:700;color:#222;"><span style="font-weight:400;color:#444">—</span> <u style="color:#1a1acc">Motor / Feedback</u></div>
<div class="t" style="left:943.20px;top:709.94px;font-size:15.8px;line-height:15.8px;font-weight:700;color:#222;"><span style="font-weight:400;color:#444">—</span> <u style="color:#1a1acc">Feedback</u><span style="font-weight:400;color:#666">,</span> <u style="color:#1a1acc">Wake&amp;Shake</u><span style="font-weight:400;color:#666">,</span> <u style="color:#1a1acc">Test&amp;Diagnose</u><span style="font-weight:400;color:#666">,</span></div>
<div class="t" style="left:943.20px;top:729.03px;font-size:15.8px;line-height:15.8px;font-weight:700;color:#222;"><u style="color:#1a1acc">Hall only</u><span style="font-weight:400;color:#666">,</span> <u style="color:#1a1acc">Sensorless</u></div>
<div class="t" style="left:943.20px;top:764.73px;font-size:15.8px;line-height:15.8px;font-weight:700;color:#222;"><span style="font-weight:400;color:#444">—</span> <u style="color:#1a1acc">Motor</u><span style="font-weight:400;color:#666">,</span> <u style="color:#1a1acc">Feldschwächung</u><span style="font-weight:400;color:#666">,</span> <u style="color:#1a1acc">Cogging</u></div>
<div class="r" style="left:164px;top:786px;width:353px;height:1px;background:#b4c0c5;"></div>
<div class="r" style="left:164px;top:787px;width:1241px;height:1px;background:#8eaab6;"></div>
<div class="r" style="left:164px;top:788px;width:1241px;height:1px;background:#4f7585;"></div>
<div class="r" style="left:1402px;top:81px;width:2px;height:706px;background:#e8f4f7;"></div>
<div class="r" style="left:1404px;top:80px;width:1px;height:709px;background:#4f7d92;"></div>
<div class="t" style="left:-0.50px;top:137.72px;font-size:21px;line-height:21px;font-weight:400;color:#000;">Symbolleiste</div>
<div class="t" style="left:-77.00px;width:800px;text-align:center;top:1.12px;font-size:21px;line-height:21px;font-weight:400;color:#000;white-space:pre;">Umschalter</div>
<div class="t" style="left:-77.00px;width:800px;text-align:center;top:25.02px;font-size:21px;line-height:21px;font-weight:400;color:#000;white-space:pre;">Inhalt/Suche</div>
<div class="t" style="left:158.80px;width:800px;text-align:center;top:-2.78px;font-size:21px;line-height:21px;font-weight:400;color:#000;white-space:pre;">Breitenanpassung</div>
<div class="t" style="left:158.80px;width:800px;text-align:center;top:21.32px;font-size:21px;line-height:21px;font-weight:400;color:#000;white-space:pre;">der Spalten</div>
<div class="t" style="left:376.00px;width:800px;text-align:center;top:-3.08px;font-size:21px;line-height:21px;font-weight:400;color:#000;white-space:pre;">Aufruf der</div>
<div class="t" style="left:376.00px;width:800px;text-align:center;top:20.12px;font-size:21px;line-height:21px;font-weight:400;color:#000;white-space:pre;">ASCII Objekt Referenz</div>
<div class="t" style="left:376.00px;width:800px;text-align:center;top:43.62px;font-size:21px;line-height:21px;font-weight:400;color:#000;white-space:pre;">im Web Browser</div>
<div class="t" style="left:657.00px;width:800px;text-align:center;top:5.72px;font-size:21px;line-height:21px;font-weight:400;color:#000;white-space:pre;">Aufruf der Startseite</div>
<div class="t" style="left:657.00px;width:800px;text-align:center;top:29.62px;font-size:21px;line-height:21px;font-weight:400;color:#000;white-space:pre;">der Online Hilfe</div>
<div class="t" style="left:925.80px;width:800px;text-align:center;top:5.72px;font-size:21px;line-height:21px;font-weight:400;color:#000;white-space:pre;">Feedback</div>
<div class="t" style="left:925.80px;width:800px;text-align:center;top:29.82px;font-size:21px;line-height:21px;font-weight:400;color:#000;white-space:pre;">E-Mail  Adresse</div>
<div class="t" style="left:-32.00px;width:800px;text-align:center;top:915.22px;font-size:21px;line-height:21px;font-weight:400;color:#000;white-space:pre;">Inhaltsverzeichnis</div>
<div class="t" style="left:363.50px;width:800px;text-align:center;top:914.82px;font-size:21px;line-height:21px;font-weight:400;color:#000;white-space:pre;">Informationen</div>
<svg class="r" style="left:0;top:0" width="1405" height="934" viewBox="0 0 1405 934">
<path d="M314.81 54.82 L269.04 173.23" stroke="#000" stroke-width="4.3" stroke-linecap="butt"/>
<path d="M569.41 54.82 L524.14 173.23" stroke="#000" stroke-width="4.3" stroke-linecap="butt"/>
<path d="M757.91 72.52 L719.65 173.33" stroke="#000" stroke-width="4.3" stroke-linecap="butt"/>
<path d="M1025.11 54.82 L979.74 173.23" stroke="#000" stroke-width="4.3" stroke-linecap="butt"/>
<path d="M1327.21 54.82 L1281.54 173.23" stroke="#000" stroke-width="4.3" stroke-linecap="butt"/>
<path d="M403.58 736.91 L355.02 904.66" stroke="#000" stroke-width="4.3" stroke-linecap="butt"/>
<path d="M800.78 736.91 L752.93 904.66" stroke="#000" stroke-width="4.3" stroke-linecap="butt"/>
</svg>
</body></html>
